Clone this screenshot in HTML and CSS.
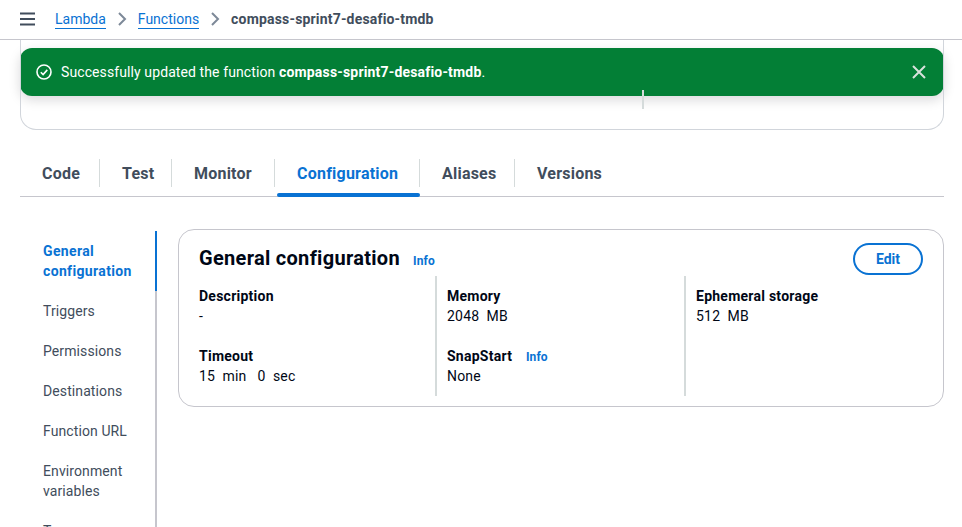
FILE: index.html
```html
<!DOCTYPE html>
<html lang="en">
<head>
<meta charset="utf-8">
<title>compass-sprint7-desafio-tmdb</title>
<link rel="stylesheet" href="styles.css">
</head>
<body>
<header class="topbar">
  <svg class="menu" width="16" height="14" viewBox="0 0 16 14"><path d="M1 1.5h15M1 7h15M1 12.5h15" fill="none" stroke="#414d5c" stroke-width="2"/></svg>
  <nav class="crumbs">
    <a class="crumb-link">Lambda</a>
    <svg class="chev" width="16" height="16" viewBox="0 0 16 16"><path d="M5 2l6 6-6 6" fill="none" stroke="#7d8998" stroke-width="2"/></svg>
    <a class="crumb-link">Functions</a>
    <svg class="chev" width="16" height="16" viewBox="0 0 16 16"><path d="M5 2l6 6-6 6" fill="none" stroke="#7d8998" stroke-width="2"/></svg>
    <span class="crumb-current">compass-sprint7-desafio-tmdb</span>
  </nav>
</header>
<div class="flash">
  <svg class="flash-icon" width="16" height="16" viewBox="0 0 16 16"><circle cx="8" cy="8" r="7" fill="none" stroke="#fff" stroke-width="1.6"/><path d="M4.8 8.2l2.3 2.3 4.2-4.6" fill="none" stroke="#fff" stroke-width="1.6"/></svg>
  <span class="flash-text">Successfully updated the function <b>compass-sprint7-desafio-tmdb</b>.</span>
  <svg class="flash-close" width="16" height="16" viewBox="0 0 16 16"><path d="M2 2l12 12M14 2L2 14" fill="none" stroke="#d8e2dc" stroke-width="2"/></svg>
</div>
<main class="page">
  <section class="summary"><span class="summary-rule"></span></section>
  <div class="tabs">
    <a class="tab">Code</a>
    <a class="tab">Test</a>
    <a class="tab">Monitor</a>
    <a class="tab active">Configuration</a>
    <a class="tab">Aliases</a>
    <a class="tab">Versions</a>
  </div>
  <div class="layout">
    <nav class="side">
      <a class="side-item active">General configuration</a>
      <a class="side-item">Triggers</a>
      <a class="side-item">Permissions</a>
      <a class="side-item">Destinations</a>
      <a class="side-item">Function URL</a>
      <a class="side-item">Environment variables</a>
      <a class="side-item">Tags</a>
    </nav>
    <section class="card">
      <div class="card-head">
        <h2 class="card-title">General configuration</h2>
        <a class="info info-head">Info</a>
        <button class="edit">Edit</button>
      </div>
      <div class="cols">
        <div class="col">
          <div class="field"><div class="label">Description</div><div class="value">-</div></div>
          <div class="field"><div class="label">Timeout</div><div class="value">15&nbsp; min&nbsp; &nbsp;0&nbsp; sec</div></div>
        </div>
        <div class="col">
          <div class="field"><div class="label">Memory</div><div class="value">2048&nbsp; MB</div></div>
          <div class="field"><div class="label">SnapStart <a class="info">Info</a></div><div class="value">None</div></div>
        </div>
        <div class="col">
          <div class="field"><div class="label">Ephemeral storage</div><div class="value">512&nbsp; MB</div></div>
        </div>
      </div>
    </section>
  </div>
</main>
</body>
</html>
```
FILE: styles.css
```css
* { box-sizing: border-box; }
html, body { margin: 0; height: 100%; overflow: hidden; background: #fff; }
body { font-family: Roboto, "Noto Sans", sans-serif; font-size: 14px; line-height: 20px; letter-spacing: .1px; color: #000716; position: relative; }

.topbar { height: 40px; border-bottom: 1px solid #c6c6cd; display: flex; align-items: center; padding: 0 0 1px 19px; }
.menu { margin-right: 20px; }
.crumbs { display: flex; align-items: center; gap: 8px; }
.crumb-link { color: #0972d3; border-bottom: 1px solid #0972d3; line-height: 17px; margin-top: 1px; letter-spacing: 0; }
.crumb-current { color: #414d5c; font-weight: 700; letter-spacing: .18px; }

.flash { position: absolute; left: 20px; top: 48px; width: 924px; height: 48px; background: #037f36; border-radius: 12px; display: flex; align-items: center; padding: 0 17px 0 16px; color: #fff; box-shadow: 0 4px 12px rgba(0, 7, 22, .15); }
.flash-icon { margin-right: 9px; flex: none; }
.flash-text { flex: 1; }
.flash-text b { letter-spacing: .18px; }
.flash-close { flex: none; }

.page { padding: 0 18px 0 20px; }
.summary { height: 90px; border: 1px solid #d1d5db; border-top: 0; border-radius: 0 0 16px 16px; position: relative; }
.summary-rule { position: absolute; left: 621px; top: 50px; height: 19px; border-left: 2px solid #d5dbdb; }

.tabs { margin-top: 27px; height: 40px; border-bottom: 1px solid #c6c6cd; display: grid; grid-template-columns: 80px 72px 103px 145px 95px auto; align-items: start; }
.tab { position: relative; height: 39px; padding: 3px 0 0 22px; font-weight: 700; font-size: 16px; line-height: 28px; letter-spacing: .22px; color: #414d5c; white-space: nowrap; }
.tab::after { content: ""; position: absolute; right: 0; top: 2px; height: 28px; border-right: 1px solid #d5dbdb; }
.tab:last-child::after { display: none; }
.tab.active { color: #0972d3; }
.tab.active::before { content: ""; position: absolute; left: 2px; right: 0; bottom: -1px; height: 4px; background: #0972d3; border-radius: 4px; }

.layout { display: flex; margin-top: 34px; align-items: flex-start; }
.side { width: 137px; flex: none; border-right: 2px solid #c6c6cd; height: 400px; display: flex; flex-direction: column; gap: 20px; margin-right: 21px; }
.side-item { display: block; padding: 10px 20px 0 23px; margin-top: -10px; color: #414d5c; position: relative; }
.side-item:first-child { margin-top: 0; }
.side-item.active { color: #0972d3; font-weight: 700; letter-spacing: .35px; margin-right: -2px; padding-bottom: 10px; margin-bottom: -10px; border-right: 2px solid #0972d3; }

.card { width: 766px; height: 178px; flex: none; margin-top: -2px; border: 1px solid #c6c6cd; border-radius: 16px; padding: 12px 20px 10px; }
.card-head { display: flex; align-items: center; height: 34px; }
.card-title { margin: -3px 0 0; font-size: 20px; line-height: 30px; font-weight: 700; letter-spacing: .3px; }
.info { color: #0972d3; font-weight: 700; font-size: 12px; line-height: 1; margin-left: 10px; letter-spacing: .15px; }
.info-head { margin-left: 13px; margin-top: 4px; }
.edit { margin-left: auto; width: 70px; height: 32px; border: 2px solid #0972d3; border-radius: 20px; background: #fff; color: #0972d3; font: 700 14px/20px Roboto, sans-serif; padding: 0; }

.cols { display: grid; grid-template-columns: 236px 249px 1fr; height: 120px; }
.col { padding-left: 10px; border-left: 2px solid #d5dbdb; display: flex; flex-direction: column; gap: 20px; padding-top: 10px; }
.col:first-child { border-left: 0; padding-left: 0; }
.label { font-weight: 700; letter-spacing: .25px; }
.value { letter-spacing: .2px; }
```
